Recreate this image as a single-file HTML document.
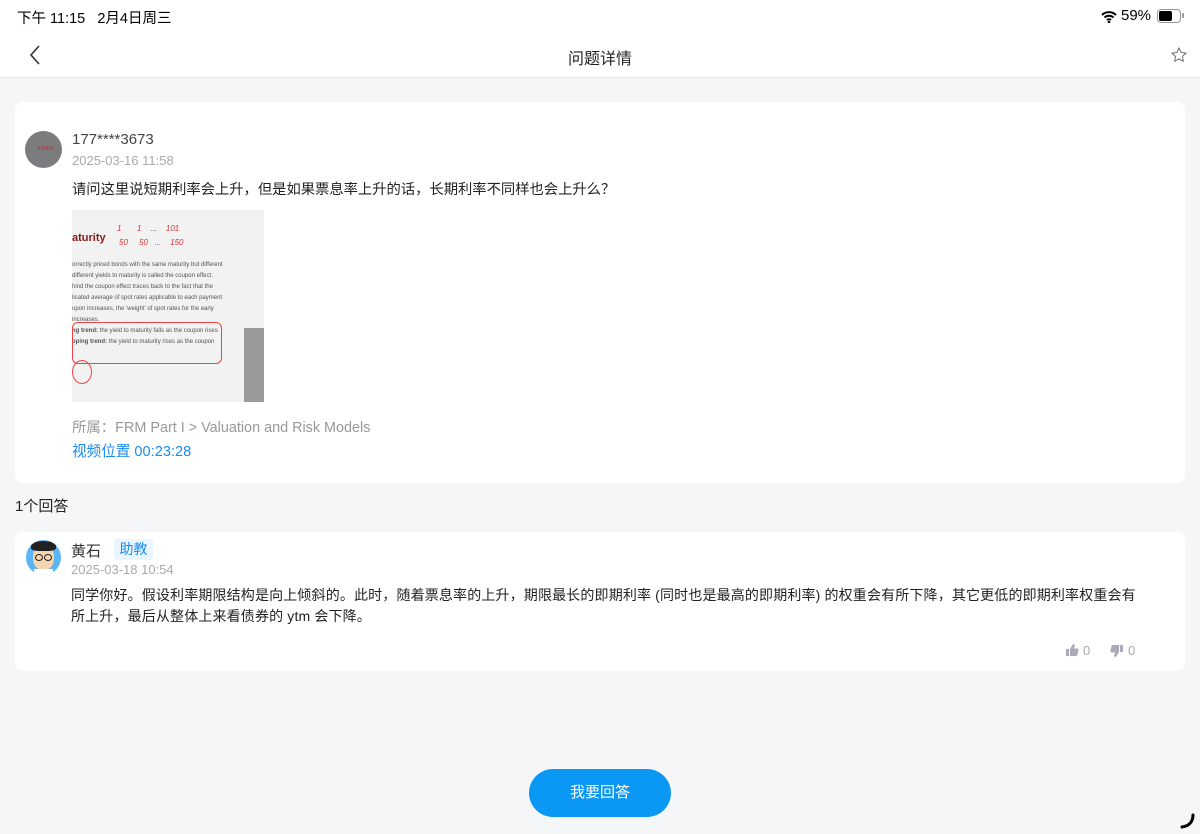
<!DOCTYPE html>
<html><head><meta charset="utf-8"><style>
body{margin:0;width:1200px;height:834px;background:#f5f6f8;font-family:"Liberation Sans","Noto Sans CJK SC",sans-serif;position:relative;overflow:hidden;color:#222}
.a{position:absolute;white-space:nowrap}
.card{position:absolute;left:15px;width:1170px;background:#fff;border-radius:8px}
</style></head><body>
<div class="a" style="left:0;top:0;width:1200px;height:77px;background:#fff;border-bottom:1px solid #e6e6e6"></div>
<div class="a" style="left:17px;top:7px;font-size:14.5px;color:#000">下午 11:15&nbsp;&nbsp;&nbsp;2月4日周三</div>
<svg class="a" style="left:1101px;top:10px" width="16" height="13" viewBox="0 0 16 13"><path d="M1 5a10 10 0 0 1 14 0M3.5 7.5a6.5 6.5 0 0 1 9 0M6 10a3 3 0 0 1 4 0" stroke="#000" stroke-width="2" fill="none"/><circle cx="8" cy="12" r="1.3"/></svg>
<div class="a" style="left:1121px;top:7px;font-size:15px;color:#000">59%</div>
<div class="a" style="left:1157px;top:9px;width:22px;height:12px;border:1px solid #999;border-radius:4px"></div>
<div class="a" style="left:1159px;top:11px;width:13px;height:10px;background:#000;border-radius:2px"></div>
<div class="a" style="left:1182px;top:13px;width:2px;height:5px;background:#999;border-radius:1px"></div>
<svg class="a" style="left:28px;top:44px" width="14" height="22"><path d="M11 2L3 11l8 9" stroke="#333" stroke-width="1.6" fill="none"/></svg>
<div class="a" style="left:0;width:1200px;top:45px;text-align:center;font-size:16px;color:#222">问题详情</div>
<svg class="a" style="left:1170px;top:46px" width="18" height="18" viewBox="0 0 24 24"><path d="M12 2.5l2.9 6.2 6.6.7-5 4.5 1.4 6.6L12 17.2l-5.9 3.3 1.4-6.6-5-4.5 6.6-.7z" stroke="#777" stroke-width="1.4" fill="none" stroke-linejoin="round"/></svg>

<div class="card" style="top:102px;height:381px"></div>
<div class="a" style="left:25px;top:131px;width:37px;height:37px;border-radius:50%;background:#7c7c7e"></div>
<div class="a" style="left:37px;top:146px;font-size:5px;color:#c22">STUDY</div>
<div class="a" style="left:72px;top:131px;font-size:15px;color:#444">177****3673</div>
<div class="a" style="left:72px;top:153px;font-size:13px;color:#aaa">2025-03-16 11:58</div>
<div class="a" style="left:72px;top:178px;font-size:14.3px;color:#222">请问这里说短期利率会上升，但是如果票息率上升的话，长期利率不同样也会上升么？</div>
<div class="a" style="left:72px;top:210px;width:192px;height:192px;background:#f2f2f2;overflow:hidden">
 <div class="a" style="left:0;top:22px;font-size:11px;font-weight:bold;color:#8b1a1a">aturity</div>
 <div class="a" style="left:45px;top:14px;font-size:8px;color:#d33;font-style:italic">1 &nbsp;&nbsp;&nbsp;&nbsp;&nbsp; 1 &nbsp;&nbsp; ... &nbsp;&nbsp; 101</div>
 <div class="a" style="left:47px;top:28px;font-size:8px;color:#d33;font-style:italic">50 &nbsp;&nbsp;&nbsp; 50 &nbsp; ... &nbsp;&nbsp; 150</div>
 <div class="a" style="left:0;top:50px;font-size:6px;line-height:11px;color:#555">orrectly priced bonds with the same maturity but different<br>different yields to maturity is called the coupon effect.<br>hind the coupon effect traces back to the fact that the<br>licated average of spot rates applicable to each payment<br>upon increases, the 'weight' of spot rates for the early<br>increases.<br><b>ng trend:</b> the yield to maturity falls as the coupon rises<br><b>oping trend:</b> the yield to maturity rises as the coupon</div>
 <div class="a" style="left:0;top:112px;width:148px;height:40px;border:1px solid #e44;border-radius:6px"></div>
 <div class="a" style="left:172px;top:118px;width:20px;height:74px;background:#9a9a9a"></div>
 <div class="a" style="left:0;top:150px;width:18px;height:22px;border:1px solid #e44;border-radius:50%"></div>
</div>
<div class="a" style="left:72px;top:416px;font-size:14.4px;color:#999">所属：FRM Part I &gt; Valuation and Risk Models</div>
<div class="a" style="left:72px;top:440px;font-size:14.6px;color:#1a8cf0">视频位置 00:23:28</div>

<div class="a" style="left:15px;top:495px;font-size:15px;color:#222">1个回答</div>
<div class="card" style="top:532px;height:139px"></div>
<div class="a" style="left:26px;top:540px;width:35px;height:35px;border-radius:50%;background:#5bb5f5;overflow:hidden">
 <div class="a" style="left:7px;top:5px;width:21px;height:25px;border-radius:45%;background:#f6d5b0"></div>
 <div class="a" style="left:5px;top:1px;width:25px;height:10px;border-radius:50% 50% 30% 30%;background:#222"></div>
 <div class="a" style="left:9px;top:14px;width:6px;height:5px;border:1px solid #222;border-radius:50%"></div>
 <div class="a" style="left:18px;top:14px;width:6px;height:5px;border:1px solid #222;border-radius:50%"></div>
 <div class="a" style="left:8px;top:29px;width:19px;height:8px;background:#fff"></div>
</div>
<div class="a" style="left:71px;top:540px;font-size:15px;color:#333">黄石</div>
<div class="a" style="left:114px;top:539px;width:39px;height:21px;background:#eaf5ff;border-radius:3px;color:#1a8cf0;font-size:14px;text-align:center;line-height:21px">助教</div>
<div class="a" style="left:71px;top:562px;font-size:13px;color:#aaa">2025-03-18 10:54</div>
<div class="a" style="left:71px;top:585px;font-size:14px;line-height:21px;color:#222;letter-spacing:0.15px">同学你好。假设利率期限结构是向上倾斜的。此时，随着票息率的上升，期限最长的即期利率 (同时也是最高的即期利率) 的权重会有所下降，其它更低的即期利率权重会有<br>所上升，最后从整体上来看债券的 ytm 会下降。</div>
<svg class="a" style="left:1065px;top:643px" width="14" height="14" viewBox="0 0 14 14"><rect x="1" y="6" width="3" height="7" fill="#aab"/><path d="M5 6l3-5c1.5 0 2 1 1.7 2.3L9 5.5h3.3c1 0 1.5.8 1.3 1.7l-1.2 4.8c-.2.6-.7 1-1.3 1H5z" fill="#aab"/></svg>
<div class="a" style="left:1083px;top:643px;font-size:13px;color:#aaa">0</div>
<svg class="a" style="left:1110px;top:644px" width="14" height="14" viewBox="0 0 14 14"><g transform="translate(0,14) scale(1,-1)"><rect x="10" y="6" width="3" height="7" fill="#aab"/><path d="M9 6l-3-5c-1.5 0-2 1-1.7 2.3L5 5.5H1.7c-1 0-1.5.8-1.3 1.7l1.2 4.8c.2.6.7 1 1.3 1H9z" fill="#aab"/></g></svg>
<div class="a" style="left:1128px;top:643px;font-size:13px;color:#aaa">0</div>

<div class="a" style="left:529px;top:769px;width:142px;height:48px;border-radius:24px;background:#0b97f4;color:#fff;font-size:15px;text-align:center;line-height:48px">我要回答</div>
<svg class="a" style="left:1177px;top:812px" width="20" height="20"><path d="M16 3c0 7-4 11-11 12" stroke="#000" stroke-width="3" fill="none" stroke-linecap="round"/></svg>
</body></html>
